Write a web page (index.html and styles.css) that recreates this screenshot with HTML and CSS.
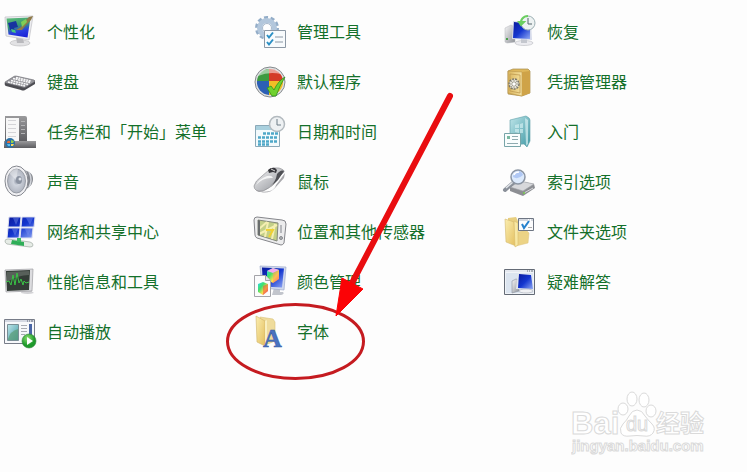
FILE: index.html
```html
<!DOCTYPE html>
<html lang="zh-CN">
<head>
    <meta charset="utf-8">
    <title>控制面板</title>
    <link rel="stylesheet" href="styles.css">
</head>
<body>
    <!-- shared gradients -->
    <svg class="defs" width="0" height="0" aria-hidden="true">
        <defs>
            <linearGradient id="blue" x1="0" y1="0" x2="1" y2="1"><stop offset="0" stop-color="#0a1a9c"/><stop offset=".5" stop-color="#1436cf"/><stop offset="1" stop-color="#8fa8f4"/></linearGradient>
            <linearGradient id="desk" x1=".3" y1="0" x2=".6" y2="1"><stop offset="0" stop-color="#58b878"/><stop offset=".4" stop-color="#3a9a70"/><stop offset=".7" stop-color="#2a3fe0"/><stop offset="1" stop-color="#1b22d8"/></linearGradient>
            <linearGradient id="steel" x1="0" y1="0" x2="1" y2="1"><stop offset="0" stop-color="#f7f7f8"/><stop offset="1" stop-color="#8d9096"/></linearGradient>
            <linearGradient id="gold" x1="0" y1="0" x2="1" y2="0"><stop offset="0" stop-color="#d9b45c"/><stop offset="1" stop-color="#f6e2a0"/></linearGradient>
            <linearGradient id="folder" x1="0" y1="0" x2="1" y2="1"><stop offset="0" stop-color="#fbeeb0"/><stop offset="1" stop-color="#e3be5d"/></linearGradient>
            <linearGradient id="teal" x1="0" y1="0" x2="1" y2="1"><stop offset="0" stop-color="#bfe6ea"/><stop offset="1" stop-color="#3f98a4"/></linearGradient>
            <linearGradient id="dark" x1="0" y1="0" x2="0" y2="1"><stop offset="0" stop-color="#9a9a9c"/><stop offset="1" stop-color="#5c5c60"/></linearGradient>
            <radialGradient id="cone"><stop offset="0" stop-color="#8e95a4"/><stop offset=".35" stop-color="#d0d5de"/><stop offset="1" stop-color="#b0b5c0"/></radialGradient>
            <radialGradient id="play" cx=".4" cy=".3"><stop offset="0" stop-color="#8be06f"/><stop offset="1" stop-color="#1e9a2b"/></radialGradient>
            <linearGradient id="rainbow" x1="0" y1="0" x2="1" y2="1"><stop offset="0" stop-color="#29d8f0"/><stop offset=".35" stop-color="#42e06a"/><stop offset=".65" stop-color="#ffe14a"/><stop offset="1" stop-color="#f0398a"/></linearGradient>
        </defs>
    </svg>

    <main class="panel">
        <a class="item" href="#personalization">
            <svg class="icon" viewBox="0 0 32 32">
                <ellipse cx="16" cy="28" rx="10" ry="3" fill="#e2e2e4" stroke="#b8b8bb" stroke-width=".6"/>
                <path d="M12 22l7 1 1 5h-7z" fill="#b9b9bd"/>
                <path d="M1 2l28-1-4 24-23-4z" fill="#ececef" stroke="#c0c0c6" stroke-width=".7"/>
                <path d="M2.500 3.500l24-1-3 20-19-3z" fill="url(#desk)"/>
                <path d="M4 8l8-2 2 6-4 1 1 3-5-1-1-4z" fill="#17339f"/>
                <path d="M7 14l4 1 1 3-4-1z" fill="#48c880"/>
                <path d="M12 15l5-3 4-6 4-4 4-1-2 4-5 5-4 5z" fill="#8f7a48"/>
                <path d="M17 7l5-3 1 3-5 5z" fill="#7fcf56"/>
            </svg>
            <span>个性化</span>
        </a>
        <a class="item" href="#admin-tools">
            <svg class="icon" viewBox="0 0 32 32">
                <circle cx="13" cy="13" r="10.500" fill="none" stroke="#93adc8" stroke-width="3" stroke-dasharray="4 2.600"/>
                <circle cx="13" cy="13" r="7.500" fill="none" stroke="#b3c7dc" stroke-width="5"/>
                <circle cx="13" cy="13" r="4.500" fill="#fff" stroke="#8199b5" stroke-width=".7"/>
                <path d="M10.500 15.500h21v17h-21z" fill="#f8fbfd" stroke="#8c98a5"/>
                <path d="M13 20l2 2.500 4-5M13 27l2 2.500 4-5" fill="none" stroke="#2a8fc4" stroke-width="2"/>
                <path d="M21 22h8M21 27h8" stroke="#8c98a5"/>
            </svg>
            <span>管理工具</span>
        </a>
        <a class="item" href="#recovery">
            <svg class="icon" viewBox="0 0 32 32">
                <path d="M1 13l6-3 4 2v15l-8 1-2-1z" fill="url(#steel)" stroke="#b3b5ba" stroke-width=".5"/>
                <path d="M2 23h2v2H2z" fill="#4ba04b"/>
                <ellipse cx="20" cy="28" rx="9" ry="2.500" fill="#ececf0" stroke="#b8bac0" stroke-width=".6"/>
                <path d="M17 23h6v5h-6z" fill="#c4c7ce"/>
                <path d="M9 6l18 2 1 17-20-1z" fill="#d5daea"/>
                <path d="M10 7l16 2v15l-17-1z" fill="url(#blue)"/>
                <circle cx="24" cy="8" r="7" fill="#edf2f2" stroke="#9db0b4"/>
                <path d="M17 10c-1-5 2-9 7-9M17 10l-2-3h5z" fill="none" stroke="#6bcf60" stroke-width="2"/>
                <path d="M24 3v6h4" fill="none" stroke="#53646b"/>
            </svg>
            <span>恢复</span>
        </a>

        <a class="item" href="#keyboard">
            <svg class="icon" viewBox="0 0 32 32">
                <path d="M1 17l19 5 11-6v3l-10 6q-2 1-4 0l-15-4q-2-1-1-4z" fill="#4d4d52"/>
                <path d="M1 17l8-5q1-1 3-1l18 4q2 1 0 2l-8 5q-2 1-4 0l-16-4q-1 0-1-1z" fill="#96969b" stroke="#6a6a70" stroke-width=".6"/>
                <path d="M4 17l17 4M7 15.500l17 4M9 13.500l17 4M12 12.500l15 3.500" stroke="#f8f8f9" stroke-width="1.500" stroke-dasharray="2 .6"/>
            </svg>
            <span>键盘</span>
        </a>
        <a class="item" href="#default-programs">
            <svg class="icon" viewBox="0 0 32 32">
                <circle cx="16" cy="17" r="15" fill="#dfe1e3" stroke="#84898c"/>
                <path d="M15 16V4a13 13 0 0 0-12 12z" fill="#3d9b40"/>
                <path d="M15 16V4a13 13 0 0 1 14 12z" fill="#d43b27"/>
                <path d="M15 16H3a13 13 0 0 0 12 14z" fill="#2c5fb4"/>
                <path d="M15 16h14a13 13 0 0 1-14 14z" fill="#f3bd26"/>
                <path d="M4 11a13 11 0 0 1 23-2q-12-3-23 2z" fill="#fff" opacity=".5"/>
                <path d="M13 23l4-2 3 4q4-9 11-13-5 8-9 19h-4z" fill="#6fd12e" stroke="#2f8f1f" stroke-width=".8"/>
            </svg>
            <span>默认程序</span>
        </a>
        <a class="item" href="#credentials">
            <svg class="icon" viewBox="0 0 32 32">
                <path d="M4 6l5-2h15l2 2v22l-8 3-14-2z" fill="#dfb85c" stroke="#a58a4a" stroke-width=".7"/>
                <path d="M4 6l14 1v24l-14-3z" fill="url(#gold)" stroke="#b8964a" stroke-width=".6"/>
                <path d="M18 7l8-1v22l-8 3z" fill="#cfa348"/>
                <path d="M6 9l10 1v18l-10-2z" fill="none" stroke="#c09c52" stroke-width=".8"/>
                <circle cx="10" cy="19" r="5" fill="#e4e2d8" stroke="#7b776a" stroke-width="1.500" stroke-dasharray="2 1"/>
                <path d="M10 15v8M6 19h8M7 16l6 6M13 16l-6 6" stroke="#8b877a" stroke-width=".7"/>
                <circle cx="10" cy="19" r="1.500" fill="#fff"/>
            </svg>
            <span>凭据管理器</span>
        </a>

        <a class="item" href="#taskbar">
            <svg class="icon" viewBox="0 0 32 32">
                <path d="M1 1h20q2 0 2 2v24H1z" fill="url(#dark)"/>
                <path d="M2 3h13v23H2z" fill="#f7f7f7"/>
                <path d="M4 5.500h8M4 9.500h8M4 13.500h8M4 17.500h8M4 21.500h8" stroke="#d4d4d7"/>
                <path d="M17 6.500h4M17 10.500h4M17 14.500h4M17 18.500h4" stroke="#b3b3b5"/>
                <path d="M0 26h32v7H0z" fill="url(#dark)"/>
                <circle cx="6" cy="28" r="5" fill="#2c70a4"/>
                <path d="M3 27q1-2 3-1v2H3z" fill="#e56b37"/>
                <path d="M7 25l3 1-1 2H7z" fill="#93d04b"/>
                <path d="M3 29h3v2H4z" fill="#55bdf0"/>
                <path d="M7 29h3l-1 2H7z" fill="#ffd650"/>
            </svg>
            <span>任务栏和「开始」菜单</span>
        </a>
        <a class="item" href="#date-time">
            <svg class="icon" viewBox="0 0 32 32">
                <path d="M1.500 10.500h24v21h-24z" fill="#f3fafc" stroke="#8ba9b8"/>
                <path d="M2 11h23v4H2z" fill="#a9d0de"/>
                <path d="M9 18.500h15M4 22.500h20M4 26.500h20M4 29.500h12" stroke="#4fa8c8" stroke-width="2.400" stroke-dasharray="3 1"/>
                <circle cx="23" cy="9" r="7.500" fill="#eef1f3" stroke="#b3babf" stroke-width="1.500"/>
                <path d="M23 4v6h4" fill="none" stroke="#6c7c87"/>
            </svg>
            <span>日期和时间</span>
        </a>
        <a class="item" href="#getting-started">
            <svg class="icon" viewBox="0 0 32 32">
                <path d="M6 5l16-4q4 2 4 4v21l-3 6-3-3-14 1z" fill="url(#teal)" stroke="#5e9fa8" stroke-width=".6"/>
                <path d="M21 3l3 2v24l-2 2z" fill="#d5eff1" opacity=".7"/>
                <path d="M11 10l4-1v4h-4zM16 9l3-1v5h-3zM11 14h4v4l-4-1zM16 14h3v4h-3z" fill="#dcf5f7" opacity=".6"/>
                <path d="M.5 18.500h16v13H.5z" fill="#f9fdfd" stroke="#78a5a9"/>
                <path d="M3 21h3v3H3z" fill="#7bb9a2"/>
                <path d="M8 21.500h6M8 24.500h6M3 28.500h11" stroke="#8fabb0"/>
            </svg>
            <span>入门</span>
        </a>

        <a class="item" href="#sound">
            <svg class="icon" viewBox="0 0 32 32">
                <path d="M16 3l9 4q4 2 4 7t-4 8l-10 8z" fill="#85888f"/>
                <path d="M21 5q5 10 0 21M25 7q4 8 0 15" fill="none" stroke="#d1d4da" stroke-width="1.500"/>
                <ellipse cx="12.500" cy="16" rx="11.500" ry="15" fill="#f0f0f3" stroke="#85888f"/>
                <ellipse cx="12.500" cy="16" rx="9" ry="12" fill="url(#cone)" stroke="#8b9099" stroke-width=".8"/>
                <path d="M12 15L5 8q4-5 9-4z" fill="#fff" opacity=".35"/>
                <ellipse cx="15" cy="15" rx="3" ry="4" fill="#8a92a0"/>
                <circle cx="16" cy="14" r="1.500" fill="#dfe3e9"/>
            </svg>
            <span>声音</span>
        </a>
        <a class="item" href="#mouse">
            <svg class="icon" viewBox="0 0 32 32">
                <path d="M2 25q6 3 14 1 5-2 6-6l9-12-1 5-9 10q-6 6-14 4-4 0-5-2z" fill="#a9a9ad"/>
                <path d="M0 21q1-5 8-10l7-6q4-3 10-2 6 2 5 4l-9 9q-5 8-12 10-9 1-9-5z" fill="url(#steel)" stroke="#85858a" stroke-width=".6"/>
                <path d="M14 5q3-3 7-2l2 2-1 3-3-1-4 1z" fill="#38383d"/>
                <path d="M23 9q4-5 7-3l-6 9-8 8q6-7 7-14z" fill="#4f5055"/>
                <path d="M17 4l4 2" stroke="#ddd"/>
                <path d="M2 20q3-6 11-9 5-1 6 2-10-1-17 7z" fill="#fff" opacity=".8"/>
            </svg>
            <span>鼠标</span>
        </a>
        <a class="item" href="#indexing">
            <svg class="icon" viewBox="0 0 32 32">
                <path d="M6 22l10-6 14 3 1 4-12 8-13-5z" fill="#8c8e93"/>
                <path d="M6 22l10-6 14 3-11 7z" fill="#d7d8db" stroke="#a0a2a7" stroke-width=".6"/>
                <path d="M20 28l9-5" stroke="#d8d9dc"/>
                <circle cx="20" cy="28" r="1" fill="#75cc47"/>
                <path d="M9 18l-8 7" stroke="#8a9099" stroke-width="4" stroke-linecap="round"/>
                <path d="M9 17l-7 6" stroke="#dfe3e8" stroke-width="1.500"/>
                <circle cx="14" cy="12" r="7" fill="#dceafc" stroke="#8b95a3" stroke-width="1.500"/>
                <path d="M9 12q5 3 10-2-1-4-5-4t-5 6z" fill="#b0c8f4"/>
                <path d="M10 10q1-3 5-3" fill="none" stroke="#fff" stroke-width="1.500"/>
            </svg>
            <span>索引选项</span>
        </a>

        <a class="item" href="#network">
            <svg class="icon" viewBox="0 0 32 32">
                <g fill="url(#blue)" stroke="#dfe2f1">
                    <path d="M5 2h12l-1 10H4zM18 2h13l-1 10H17zM4 13h12l-1 10H3zM17 13h12l-1 10H16z"/>
                </g>
                <path d="M9 3h6l-3 7zM22 3h7l-3 7zM8 14h6l-3 7zM21 14h6l-3 7z" fill="#8095f1" opacity=".4"/>
                <path d="M1 26q0-2 3-2l22 3q3 1 3 3t-3 2L3 29q-2-1-2-3z" fill="#e6ece6" stroke="#9fa9a2" stroke-width=".7"/>
                <path d="M8 25l12 2v4L7 29z" fill="#2fae58"/>
                <path d="M13 23h4v4h-4z" fill="#3dbb63"/>
            </svg>
            <span>网络和共享中心</span>
        </a>
        <a class="item" href="#location">
            <svg class="icon" viewBox="0 0 32 32">
                <path d="M0 5q0-3 3-3l25 3q4 0 4 4l-2 19q-1 2-3 2L3 23q-2-1-2-3z" fill="#ececed" stroke="#85868b"/>
                <path d="M4 5l20 3-1 18L4 20z" fill="#c3cf88" stroke="#83877a"/>
                <path d="M5 14l8-7M5 19l18-9M14 7l-3 15M18 24l3-15" stroke="#f5efb2" stroke-width="2"/>
                <path d="M12 15h7l-4 7" fill="none" stroke="#f0d033" stroke-width="2"/>
                <path d="M4 5l2 .5v15L4 20z" fill="#696d6d"/>
                <path d="M27 10v8" stroke="#a4a7ab" stroke-width="1.500"/>
                <circle cx="27" cy="23" r="1.500" fill="#b1b4b8" stroke="#66686d" stroke-width=".7"/>
            </svg>
            <span>位置和其他传感器</span>
        </a>
        <a class="item" href="#folder-options">
            <svg class="icon" viewBox="0 0 32 32">
                <path d="M10 18l12-3 3 3-1 10-12 3z" fill="#ecd385" stroke="#dcc27a" stroke-width=".5"/>
                <path d="M4 3l8-1 2 4v16H4z" fill="#e8cf80"/>
                <path d="M1 4l9 3 2 24-10-4z" fill="url(#folder)" stroke="#d3b86e" stroke-width=".6"/>
                <path d="M10 6l4 2v22l-3 2z" fill="#f8e8a4" stroke="#d8bc6c" stroke-width=".6"/>
                <path d="M14.500 3.500h15v12h-15z" fill="#fcfcfd" stroke="#6e7683"/>
                <path d="M15 5h14" stroke="#abb4c2" stroke-dasharray="9 1 1 1"/>
                <path d="M18 9l2 4 5-7" fill="none" stroke="#2581cd" stroke-width="2"/>
                <path d="M24 12.500h4" stroke="#aaa"/>
            </svg>
            <span>文件夹选项</span>
        </a>

        <a class="item" href="#performance">
            <svg class="icon" viewBox="0 0 32 32">
                <path d="M18 25h8l4 3q-6 2-13 0z" fill="#d3d3d6"/>
                <path d="M1 5l28-1-1 22-26 1z" fill="#dcdcdf" stroke="#9c9ca1" stroke-width=".7"/>
                <path d="M2 6l24-1-1 20-22 1z" fill="#333c36"/>
                <path d="M3 7l22-1v4Q14 10 3 17z" fill="#717873" opacity=".6"/>
                <path d="M2 17l3-1 2 4 2-10 2 10 2-12 2 10 2-4 2 6 1-4 2 2 3-1" fill="none" stroke="#39c345"/>
            </svg>
            <span>性能信息和工具</span>
        </a>
        <a class="item" href="#color">
            <svg class="icon" viewBox="0 0 32 32">
                <path d="M20 23h6v4h3q2 2-2 3h-9z" fill="#c2c5cc"/>
                <path d="M6 1l26 1-2 23-22-2z" fill="#d1d9ee" stroke="#9daacb" stroke-width=".7"/>
                <path d="M8 2.500l22 1-2 19-19-1z" fill="url(#blue)"/>
                <path d="M13 6l6-3 6 2v9l-6 4-6-3z" fill="url(#rainbow)"/>
                <path d="M13 6l6 2 6-3-6-2z" fill="#f3a9ed"/>
                <path d="M19 8l6-3v9l-6 4z" fill="#ff9a5a" opacity=".5"/>
                <path d="M.5 10.500h11l5 5v16H.5z" fill="#fbfbfc" stroke="#a4a4a9"/>
                <path d="M11.500 10.500v5h5" fill="#e4e4e7" stroke="#a4a4a9"/>
                <path d="M4 19l5-2 5 2v7l-5 4-5-3z" fill="url(#rainbow)"/>
                <path d="M9 21l5-2v7l-5 4z" fill="#ef493c" opacity=".5"/>
            </svg>
            <span>颜色管理</span>
        </a>
        <a class="item" href="#troubleshooting">
            <svg class="icon" viewBox="0 0 32 32">
                <path d="M.5 4.500h30v25H.5z" fill="#f0f3f7" stroke="#646b76"/>
                <path d="M1 5h29v2H1z" fill="#e4e8ef"/>
                <path d="M23 6h1M25 6h1M27 6h2" stroke="#69707b"/>
                <path d="M2 8h27v20H2z" fill="#dbe4ef"/>
                <path d="M8 16l4-2 3 1v11l-7 2z" fill="url(#steel)" stroke="#8b929e" stroke-width=".6"/>
                <path d="M14 8l14 1 2 16-18-1z" fill="#e2e7ef"/>
                <path d="M15 9l12 1 2 14-15-1z" fill="url(#blue)"/>
                <ellipse cx="22" cy="26" rx="7" ry="2" fill="#f0f1f4" stroke="#a6abb5" stroke-width=".6"/>
            </svg>
            <span>疑难解答</span>
        </a>

        <a class="item" href="#autoplay">
            <svg class="icon" viewBox="0 0 32 32">
                <path d="M.5 4.500h30v24H.5z" fill="#f7f8fb" stroke="#777c88"/>
                <path d="M1 5h29v2H1z" fill="#d4d8e2"/>
                <path d="M23 6h1M25 6h1M27 6h2" stroke="#5d6376"/>
                <path d="M3.500 9.500h11v16h-11z" fill="url(#teal)" stroke="#798f96"/>
                <path d="M4 24q2-8 10-10v11H4z" fill="#5b9d75" opacity=".7"/>
                <path d="M17 10.500h6M17 13.500h6M17 16.500h6M17 19.500h4" stroke="#a8abb3"/>
                <path d="M25 9h3v12h-3z" fill="#4965a5"/>
                <circle cx="25" cy="26" r="7" fill="url(#play)" stroke="#32823a" stroke-width=".6"/>
                <path d="M23 22l6 4-6 4z" fill="#fff"/>
            </svg>
            <span>自动播放</span>
        </a>
        <div class="marked">
            <a class="item" href="#fonts">
                <svg class="icon" viewBox="0 0 32 32">
                    <path d="M6 2l13 2 2 3v19l-10 4z" fill="#efdc9c" stroke="#d9c27c" stroke-width=".6"/>
                    <path d="M2 1l9 5v25l-8-4z" fill="url(#folder)" stroke="#d0b468" stroke-width=".6"/>
                    <path d="M11 6l2-1v24l-2 2z" fill="#f9efc0"/>
                    <text class="letter" x="9" y="32">A</text>
                </svg>
                <span>字体</span>
            </a>
            <!-- circle and arrow pointing at the fonts entry -->
            <svg class="marker" viewBox="0 0 250 300" aria-hidden="true">
                <ellipse cx="75.500" cy="256.500" rx="68" ry="37" fill="none" stroke="#c51b20" stroke-width="3"/>
                <path d="M230 11L131 200" stroke="#e90d10" stroke-width="6" stroke-linecap="round"/>
                <path d="M116 231l6-38 21 11z" fill="#fb0306" stroke="#fb0306"/>
            </svg>
        </div>
    </main>

    <svg class="watermark" viewBox="0 0 140 72" role="img" aria-label="Baidu 经验">
        <g class="outline">
            <text class="brand" x="0" y="44">Bai</text>
            <ellipse cx="52" cy="19" rx="5" ry="6"/>
            <ellipse cx="61" cy="9" rx="5" ry="7"/>
            <ellipse cx="73" cy="10" rx="5" ry="7"/>
            <ellipse cx="80" cy="21" rx="5" ry="6"/>
            <path d="M66 20q5 0 8 6 3 4 7 8 4 4 1 9-3 4-9 3-7-1-14 0-7 1-9-3-2-5 2-9 4-4 6-8 3-6 8-6z"/>
            <text class="brand-du" x="55" y="41">du</text>
            <text class="brand-cn" x="85" y="42">经验</text>
            <text class="brand-url" x="1" y="61">jingyan.baidu.com</text>
        </g>
    </svg>
</body>
</html>
```

FILE: styles.css
```css
body {
    position: relative;
    min-height: 100vh;
    margin: 0;
    background: #fdfdfd;
    font-family: "Noto Sans CJK SC", sans-serif;
    font-size: 16px;
    overflow-x: hidden;
}

.defs {
    position: absolute;
}

.panel {
    display: grid;
    grid-template-columns: repeat(3, 1fr);
    column-gap: 7px;
    padding: 6px 0 0 4px;
}

.item {
    display: flex;
    align-items: center;
    gap: 11px;
    min-height: 50px;
    color: #14702a;
    line-height: 24px;
    text-decoration: none;
    white-space: nowrap;
}

.item:hover {
    text-decoration: underline;
}

.icon {
    flex: none;
    width: 32px;
    height: 32px;
    overflow: visible;
}

.letter {
    font: bold 26px "Liberation Serif", serif;
    fill: #4a72c0;
    stroke: #34569e;
    stroke-width: 0.5;
}

/* red circle and arrow lie over the neighbouring rows */
.marked {
    position: relative;
}

.marker {
    position: absolute;
    top: -221px;
    left: -34px;
    width: 250px;
    height: 300px;
    pointer-events: none;
}

.watermark {
    position: absolute;
    right: 36px;
    bottom: 10px;
    width: 140px;
    height: 72px;
}

.outline {
    fill: #fff;
    stroke: #dadada;
    stroke-width: 1;
}

.brand {
    font: bold 31px "Liberation Sans", sans-serif;
}

.brand-du {
    font: 20px "Liberation Sans", sans-serif;
}

.brand-cn {
    font: bold 24px "Noto Sans CJK SC", sans-serif;
}

.brand-url {
    font: bold 15px "Liberation Sans", sans-serif;
}
```
